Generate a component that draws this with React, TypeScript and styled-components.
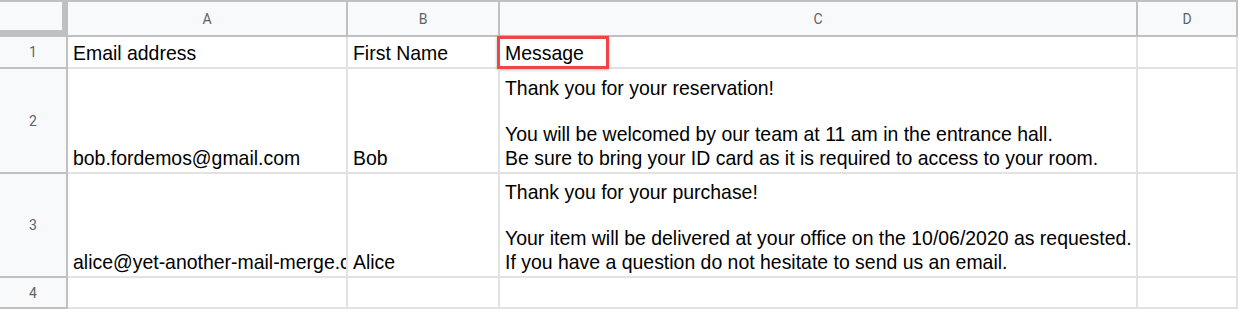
import React from "react";
import styled, { createGlobalStyle } from "styled-components";

const GlobalStyle = createGlobalStyle`
  body {
    margin: 0;
    background: #ffffff;
  }
`;

const HEADER_LINE = "#c0c0c0";
const GRID_LINE = "#e2e2e3";

const Sheet = styled.div`
  display: grid;
  grid-template-columns: 68px 280px 152px 638px 100px;
  grid-template-rows: 37px 32px 105px 104px 31px;
  width: 1238px;
  font-family: "Liberation Sans", Arial, sans-serif;
`;

const Corner = styled.div`
  box-sizing: border-box;
  background: #f8f9fa;
  border-top: 2px solid ${HEADER_LINE};
  border-right: 6px solid ${HEADER_LINE};
  border-bottom: 7px solid ${HEADER_LINE};
`;

const ColHeader = styled.div`
  box-sizing: border-box;
  display: flex;
  align-items: center;
  justify-content: center;
  background: #f8f9fa;
  border-top: 2px solid ${HEADER_LINE};
  border-right: 2px solid ${HEADER_LINE};
  border-bottom: 2px solid ${HEADER_LINE};
  font-family: Roboto, "Liberation Sans", sans-serif;
  font-size: 14px;
  color: #5f6368;
`;

const RowHeader = styled.div`
  box-sizing: border-box;
  display: flex;
  align-items: center;
  justify-content: center;
  background: #f8f9fa;
  border-right: 2px solid ${HEADER_LINE};
  border-bottom: 2px solid ${HEADER_LINE};
  font-family: Roboto, "Liberation Sans", sans-serif;
  font-size: 14px;
  color: #5f6368;
`;

const Cell = styled.div<{ $spill?: boolean }>`
  box-sizing: border-box;
  position: relative;
  display: flex;
  align-items: flex-end;
  padding: 0 4px 2px 5px;
  border-right: 2px solid ${GRID_LINE};
  border-bottom: 2px solid ${GRID_LINE};
  font-size: 19.45px;
  line-height: 23.3px;
  color: #000000;
  white-space: pre;
  overflow: ${(p) => (p.$spill ? "visible" : "hidden")};
`;

const Highlight = styled.span`
  position: absolute;
  left: -3px;
  top: -1px;
  width: 112px;
  height: 33px;
  box-sizing: border-box;
  border: 3px solid #ee4646;
  box-shadow: 0 1px 3px rgba(0, 0, 0, 0.25);
  pointer-events: none;
`;

const columns = ["A", "B", "C", "D"];

const rows: string[][] = [
  ["Email address", "First Name", "Message", ""],
  [
    "bob.fordemos@gmail.com",
    "Bob",
    "Thank you for your reservation!\n\nYou will be welcomed by our team at 11 am in the entrance hall.\nBe sure to bring your ID card as it is required to access to your room.",
    "",
  ],
  [
    "alice@yet-another-mail-merge.com",
    "Alice",
    "Thank you for your purchase!\n\nYour item will be delivered at your office on the 10/06/2020 as requested.\nIf you have a question do not hesitate to send us an email.",
    "",
  ],
  ["", "", "", ""],
];

const App: React.FC = () => {
  return (
    <>
      <GlobalStyle />
      <Sheet>
        <Corner />
        {columns.map((c) => (
          <ColHeader key={c}>{c}</ColHeader>
        ))}
        {rows.map((row, r) => (
          <React.Fragment key={r}>
            <RowHeader>{r + 1}</RowHeader>
            {row.map((value, c) => {
              // the "Message" header cell is boxed in red
              const marked = r === 0 && c === 2;
              return (
                <Cell key={c} $spill={marked}>
                  {value}
                  {marked && <Highlight />}
                </Cell>
              );
            })}
          </React.Fragment>
        ))}
      </Sheet>
    </>
  );
};

export default App;
